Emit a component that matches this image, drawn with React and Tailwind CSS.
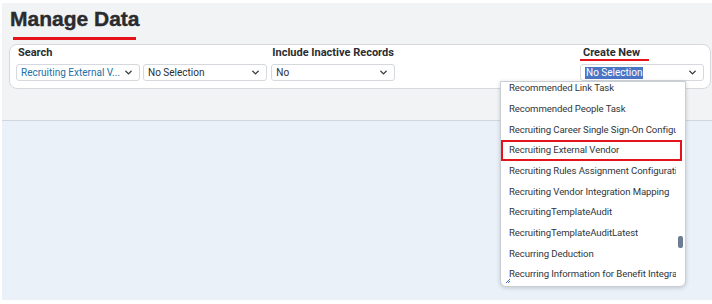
import { LuChevronDown } from "react-icons/lu";

const items = [
  "Recommended Link Task",
  "Recommended People Task",
  "Recruiting Career Single Sign-On Configuration",
  "Recruiting External Vendor",
  "Recruiting Rules Assignment Configuration",
  "Recruiting Vendor Integration Mapping",
  "RecruitingTemplateAudit",
  "RecruitingTemplateAuditLatest",
  "Recurring Deduction",
  "Recurring Information for Benefit Integration",
];

const Select = ({ value, width, blue, selected }) => (
  <div
    className={`flex items-center justify-between h-[17px] bg-white border border-[#d5d9de] rounded-[3px] pl-[4px] pr-[5px] whitespace-nowrap ${width}`}
  >
    {selected ? (
      <span className="bg-[#4a74c4] text-white px-[1px] leading-[12px]">{value}</span>
    ) : (
      <span className={blue ? "text-[#1c6fa6]" : "text-[#2a2e33]"}>{value}</span>
    )}
    <LuChevronDown className="text-[#32363a] w-[11px] h-[11px] stroke-[3] shrink-0" />
  </div>
);

export default function App() {
  return (
    <div
      className="relative w-[712px] h-[304px] bg-white pt-[3px] pl-[2px] pb-[4px] overflow-hidden text-[10px]"
      style={{ fontFamily: 'Roboto, "Liberation Sans", sans-serif' }}
    >
      <div className="flex flex-col h-full">
        <div className="h-[118px] bg-[#f2f3f5] border-b border-[#d3d7dc] px-[7px] pt-[3px]">
          <div className="w-fit">
            <h1
              className="text-[21px] leading-[26px] font-bold text-[#2a2b2e] pl-[1px]"
              style={{ fontFamily: '"Liberation Sans", Arial, sans-serif', WebkitTextStroke: "0.4px #2a2b2e" }}
            >
              Manage Data
            </h1>
            <div className="h-[3px] bg-[#e8131a] ml-[4px] mr-[4px] mt-[5px]"></div>
          </div>
          <div className="mt-[4px] w-[702px] h-[45px] bg-white border border-[#d5d9de] rounded-[8px] px-[6px] pt-[1px]">
            <div className="flex">
              <div className="w-[254px]">
                <div className="text-[11px] font-bold text-[#2a2d31] leading-[14px] pl-[2px]">Search</div>
                <div className="flex gap-[3px] mt-[4px]">
                  <Select value="Recruiting External V..." width="w-[124px]" blue />
                  <Select value="No Selection" width="w-[124px]" />
                </div>
              </div>
              <div className="w-[310px] ml-[4px]">
                <div className="text-[11px] font-bold text-[#2a2d31] leading-[14px] pl-[1px]">
                  Include Inactive Records
                </div>
                <div className="flex mt-[4px]">
                  <Select value="No" width="w-[124px]" />
                </div>
              </div>
              <div className="ml-[2px]">
                <div className="text-[11px] font-bold text-[#2a2d31] leading-[14px] pl-[3px]">Create New</div>
                <div className="flex mt-[4px]">
                  <Select value="No Selection" width="w-[124px]" selected />
                </div>
              </div>
            </div>
          </div>
        </div>
        <div className="flex-1 bg-[#eaf1f9]"></div>
      </div>

      <div className="absolute left-[580px] top-[59px] w-[69px] h-[2px] bg-[#e8131a]"></div>

      <div className="absolute left-[500px] top-[81px] w-[186px] h-[206px] bg-white border border-[#c9ced4] rounded-b-[6px] shadow-[0_1px_4px_rgba(0,0,0,0.18)] overflow-hidden">
        <div className="-mt-[4px] text-[9.6px] tracking-[-0.1px]">
          {items.map((item, i) => (
            <div
              key={i}
              className={`h-[20.7px] flex items-center ${i === 3 ? "border-2 border-[#e3141b] mr-[3px] pl-[6px]" : "mr-[9px] pl-[8px]"}`}
            >
              <div className="whitespace-nowrap overflow-hidden text-[#32363a] w-full">{item}</div>
            </div>
          ))}
        </div>
        <div className="absolute left-[177px] top-[154px] w-[5px] h-[12px] rounded-[2px] bg-[#6c7d93]"></div>
        <svg className="absolute left-[4px] bottom-[2px]" width="6" height="6" viewBox="0 0 6 6">
          <path d="M1 5 L5 1 M3 5 L5 3" stroke="#3a6fc4" strokeWidth="1" />
        </svg>
      </div>
    </div>
  );
}
